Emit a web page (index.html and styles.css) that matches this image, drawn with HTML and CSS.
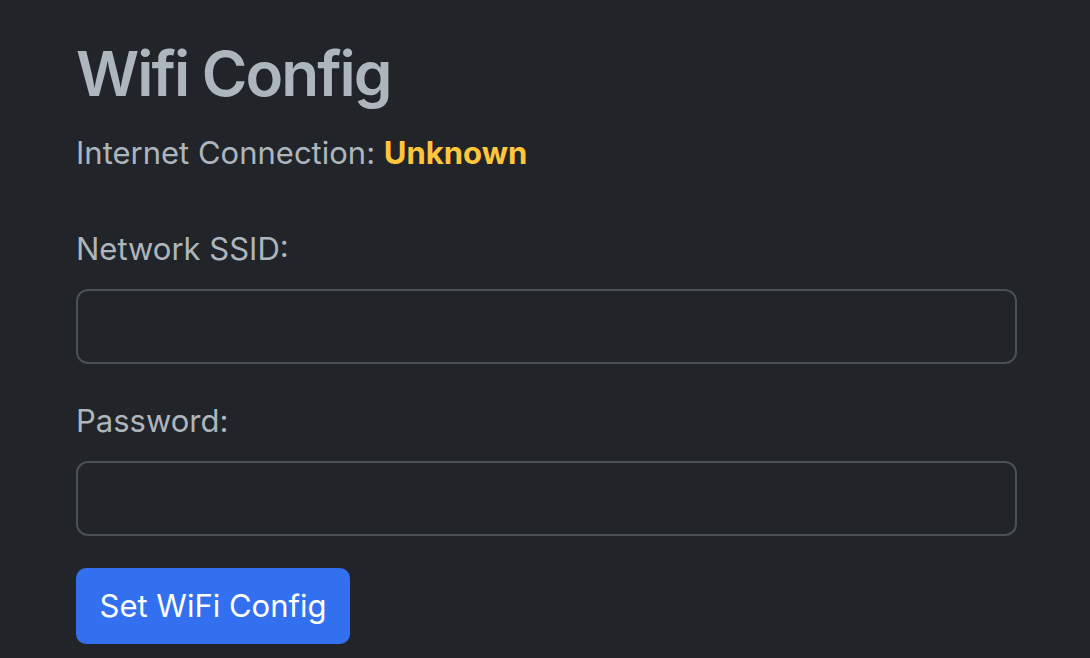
FILE: index.html
```html
<!DOCTYPE html>
<html>
<head>
<meta charset="utf-8">
<link rel="stylesheet" href="styles.css">
</head>
<body>
<main class="container">
  <h1 class="title">Wifi Config</h1>
  <p class="status">Internet Connection: <span class="unknown">Unknown</span></p>
  <form class="form">
    <div class="field">
      <label class="label" for="ssid">Network SSID:</label>
      <input class="input" id="ssid" type="text">
    </div>
    <div class="field field-last">
      <label class="label" for="pw">Password:</label>
      <input class="input" id="pw" type="password">
    </div>
    <button class="btn" type="button">Set WiFi Config</button>
  </form>
</main>
</body>
</html>
```
FILE: styles.css
```css
html, body {
  margin: 0;
  padding: 0;
  background: #212529;
  height: 100%;
}
body {
  font-family: Inter, "Noto Sans", sans-serif;
  color: #adb5bd;
  font-size: 31px;
  line-height: 1.5;
}
.container {
  padding: 37px 73px 0 76px;
}
.title {
  margin: 0;
  font-size: 62px;
  font-weight: 600;
  letter-spacing: -2px;
  line-height: 1.2;
  color: #adb5bd;
}
.status {
  margin: 18.5px 0 0;
}
.unknown {
  color: #ffc53d;
  font-weight: 700;
}
.form {
  margin-top: 50px;
  display: flex;
  flex-direction: column;
}
.field {
  display: flex;
  flex-direction: column;
  margin-bottom: 34px;
}
.field-last {
  margin-bottom: 32px;
}
.label {
  margin-bottom: 16.5px;
}
.input {
  height: 75px;
  box-sizing: border-box;
  border: 2px solid #495057;
  border-radius: 12px;
  background: #212529;
  color: #dee2e6;
  font: inherit;
  padding: 0 20px;
  outline: none;
}
.btn {
  align-self: flex-start;
  height: 76px;
  width: 274px;
  border: 0;
  border-radius: 10px;
  background: #3270f0;
  color: #fff;
  font: inherit;
  padding: 0;
}
```
